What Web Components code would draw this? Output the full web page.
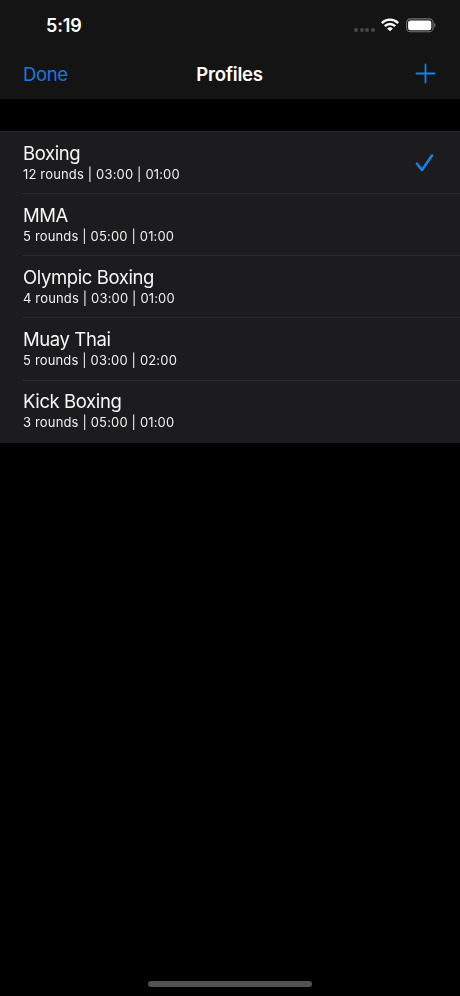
<!DOCTYPE html>
<html lang="en">
<head>
<meta charset="utf-8">
<title>Profiles</title>
<style>
html,body{margin:0;height:100%;background:#000}
body{font-family:Inter,"Liberation Sans",sans-serif;color:#fff;overflow:hidden}
</style>
</head>
<body>
<profiles-screen></profiles-screen>
<script>
const define = (name, markup) => customElements.define(name, class extends HTMLElement {
  constructor() {
    super();
    this.attachShadow({mode: 'open'}).innerHTML = markup;
  }
});

define('wifi-icon', `
<style>:host{display:block;width:18px;height:14px}svg{display:block}</style>
<svg width="18" height="14" viewBox="0 0 18 14" fill="none" stroke="#fff" stroke-width="2.4">
<path d="M.8 5.1C5.3.5 12.7.5 17.2 5.1"/><path d="M3.8 8.2C6.8 5.3 11.2 5.3 14.2 8.2"/>
<path d="M6.1 10.4C7.8 8.9 10.2 8.9 11.9 10.4L9 13.3Z" fill="#fff" stroke="none"/></svg>`);

define('battery-icon', `
<style>:host{display:block;width:30px;height:15px}svg{display:block}</style>
<svg width="30" height="15" viewBox="0 0 30 15">
<rect x=".6" y=".9" width="26.4" height="12.8" rx="3.8" fill="none" stroke="#747474" stroke-width="1.1"/>
<rect x="2.1" y="2.4" width="23.2" height="9.8" rx="2.3" fill="#fff"/>
<path d="M28.1 5.1C29.8 5.7 29.8 8.9 28.1 9.5Z" fill="#747474"/></svg>`);

define('status-bar', `
<style>
:host{display:flex;height:50px;box-sizing:border-box;padding:0 24px 0 46px;align-items:center}
time{flex:1;font-size:18px;font-weight:600;line-height:24px;letter-spacing:-.1px;padding-top:1px}
.dots{display:flex;gap:1.6px;margin:9px 6px 0 0}
i{width:4px;height:4px;border-radius:50%;background:#484848}
battery-icon{margin-left:7px}
</style>
<time>5:19</time><div class="dots"><i></i><i></i><i></i><i></i></div><wifi-icon></wifi-icon><battery-icon></battery-icon>`);

define('nav-bar', `
<style>
:host{display:grid;grid-template-columns:1fr auto 1fr;align-items:center;height:49px;box-sizing:border-box;padding:0 24px 2px 23px;font-size:18.5px;line-height:24px}
.left{color:#147bdc;letter-spacing:-.4px}
.title{font-weight:600;letter-spacing:-.2px}
svg{justify-self:end;display:block}
</style>
<span class="left"><slot name="action"></slot></span><span class="title"><slot></slot></span>
<svg width="21" height="21" viewBox="0 0 21 21" stroke="#1482e8" stroke-width="1.8" stroke-linecap="round"><path d="M1.5 10.5H19.5M10.5 1.5V19.5"/></svg>`);

define('profile-row', `
<style>
:host{display:block;height:62.15px;padding-left:23px;box-sizing:border-box}
.in{display:flex;height:100%;box-sizing:border-box;border-bottom:1px solid #2a2a2c;align-items:center;padding-right:26px}
:host(:last-of-type) .in{border-bottom-color:transparent}
.text{flex:1;padding-bottom:2px;will-change:transform}
.name{font-size:18.5px;line-height:24px;letter-spacing:-.4px;color:#f7f7f7}
.info{font-size:13px;line-height:18px;letter-spacing:.16px;color:#f0f0f0}
svg{display:none}
:host([checked]) svg{display:block}
</style>
<div class="in"><div class="text"><div class="name"><slot></slot></div><div class="info"><slot name="info"></slot></div></div>
<svg width="19" height="19" viewBox="0 0 19 19" fill="none" stroke="#1482e8" stroke-width="2.6" stroke-linecap="round" stroke-linejoin="round"><path d="M2 10.7L7 17L17 2.5"/></svg></div>`);

define('profile-list', `
<style>:host{display:block;margin-top:32px;background:#1c1c1e;border-top:1px solid #29292b;height:311px}</style><slot></slot>`);

define('home-indicator', `
<style>:host{display:block;width:164px;height:6px;border-radius:3px;background:#525252;margin:auto auto 9px}</style>`);

define('profiles-screen', `
<style>
:host{display:flex;flex-direction:column;width:460px;height:996px;background:#000}
header{background:#141414;height:99px;flex:none}
</style>
<header><status-bar></status-bar><nav-bar><span slot="action">Done</span>Profiles</nav-bar></header>
<profile-list>
<profile-row checked>Boxing<span slot="info">12 rounds | 03:00 | 01:00</span></profile-row>
<profile-row>MMA<span slot="info">5 rounds | 05:00 | 01:00</span></profile-row>
<profile-row>Olympic Boxing<span slot="info">4 rounds | 03:00 | 01:00</span></profile-row>
<profile-row>Muay Thai<span slot="info">5 rounds | 03:00 | 02:00</span></profile-row>
<profile-row>Kick Boxing<span slot="info">3 rounds | 05:00 | 01:00</span></profile-row>
</profile-list>
<home-indicator></home-indicator>`);
</script>
</body>
</html>
